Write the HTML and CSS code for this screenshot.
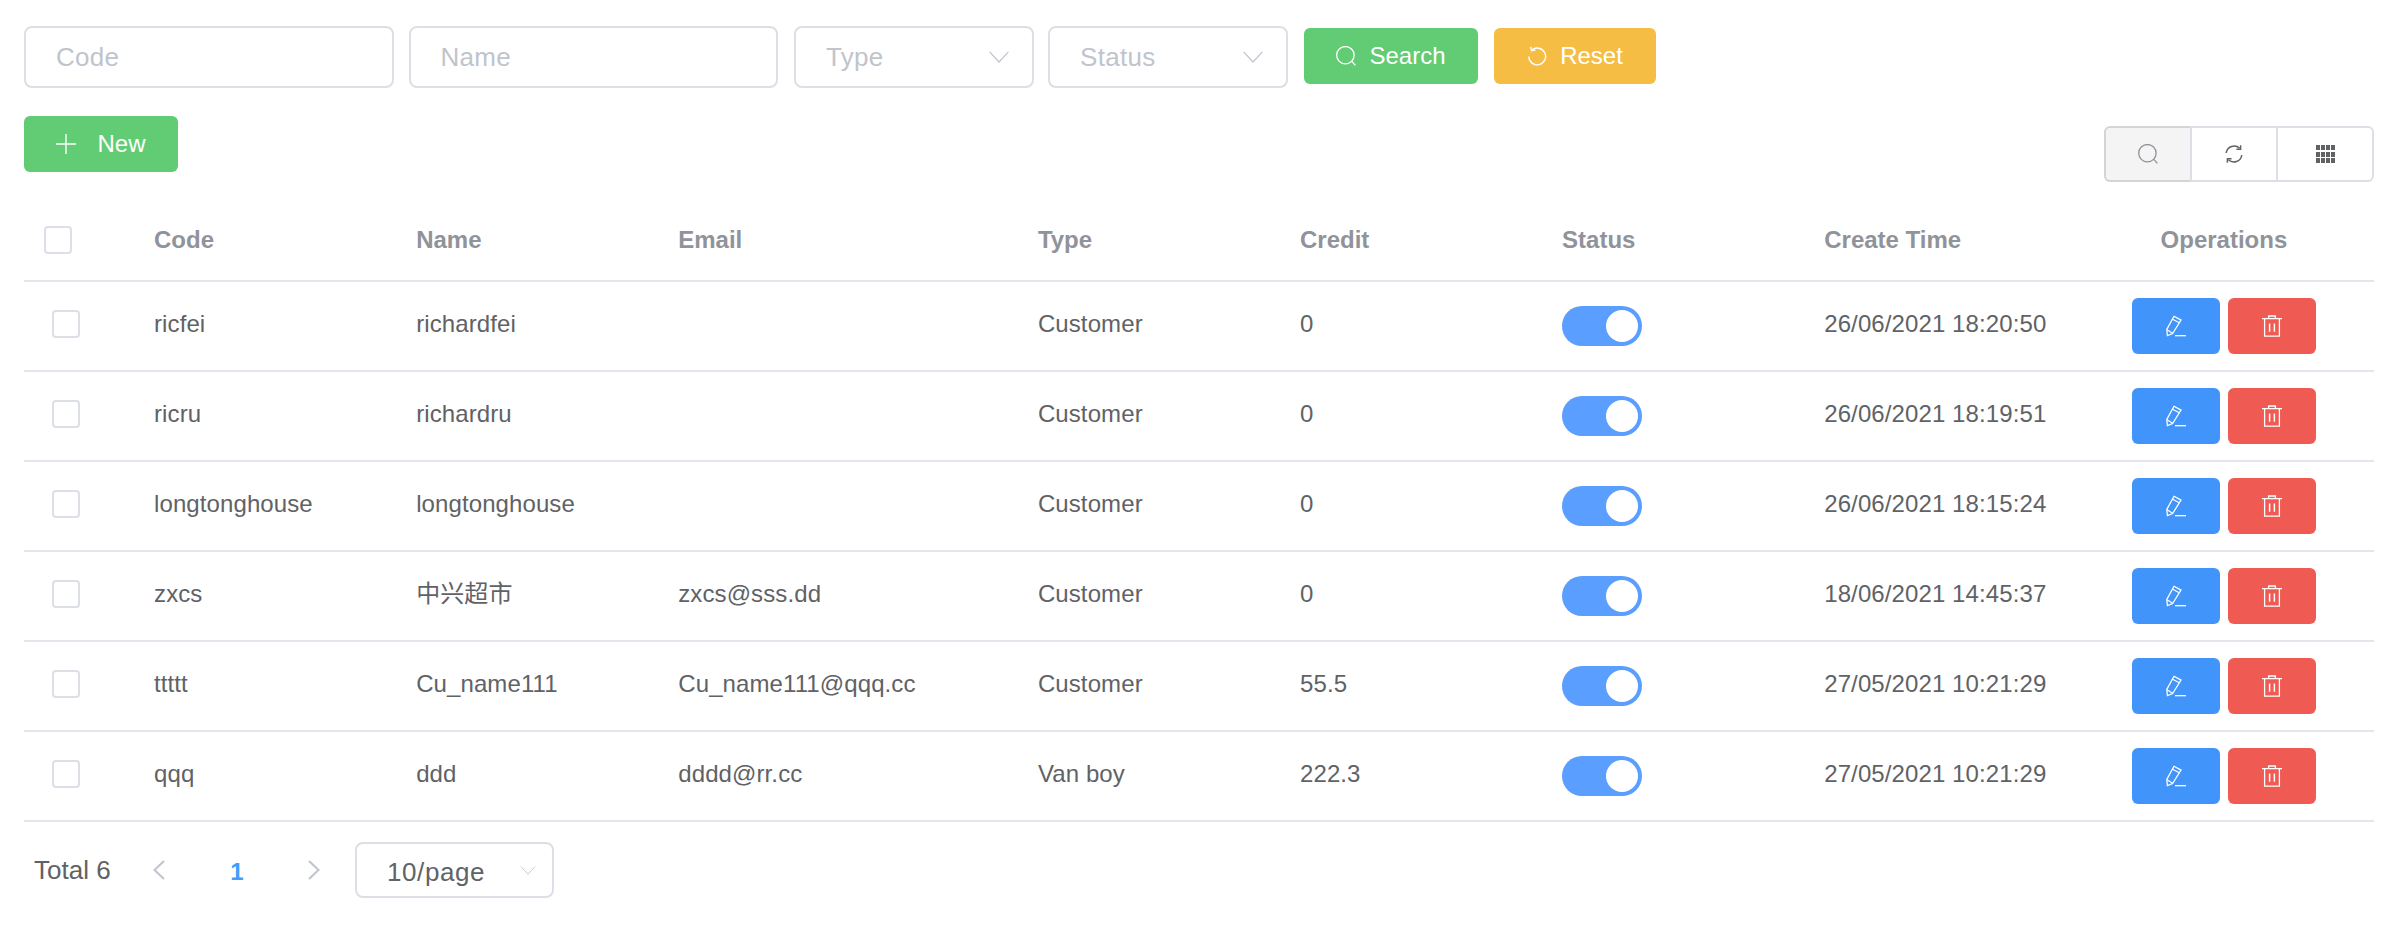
FILE: index.html
```html
<!DOCTYPE html>
<html lang="en">
<head>
  <meta charset="UTF-8" />
  <meta name="viewport" content="width=device-width, initial-scale=1.0" />
  <title>Customers</title>
  <link rel="stylesheet" href="styles.css">
</head>
<body>
  <svg class="sprites" width="0" height="0">
    <symbol id="i-search" viewBox="0 0 20 20">
      <circle cx="9.4" cy="9.2" r="8.7" fill="none" stroke="currentColor" stroke-width="1.3" />
      <path d="M15.8 15.4l3.6 4" fill="none" stroke="currentColor" stroke-width="1.3" />
    </symbol>
    <symbol id="i-reset" viewBox="0 0 20 20">
      <path d="M4.6 4.2A8.4 8.4 0 1 1 1.8 10.6" fill="none" stroke="currentColor" stroke-width="1.4" />
      <path d="M3.6 .8l1 3.8 3.8-.6" fill="none" stroke="currentColor" stroke-width="1.4" />
    </symbol>
    <symbol id="i-chevron" viewBox="0 0 20 12">
      <path d="M.6.8L10 11 19.4.8" fill="none" stroke="currentColor" stroke-width="1.2" />
    </symbol>
    <symbol id="i-plus" viewBox="0 0 20 20">
      <path d="M10 0v20M0 10h20" fill="none" stroke="currentColor" stroke-width="1.4" />
    </symbol>
    <symbol id="i-refresh" viewBox="0 0 18 18">
      <path d="M1.2 8A8 8 0 0 1 14.6 3.2M16.8 10A8 8 0 0 1 3.4 14.8" fill="none" stroke="currentColor" stroke-width="1.5" />
      <path d="M15.6 .2v4h-4.2M2.4 17.8v-4h4.2" fill="none" stroke="currentColor" stroke-width="1.5" />
    </symbol>
    <symbol id="i-edit" viewBox="0 0 20 21">
      <path d="M8 .8l7 3.8-8.4 13.4-5.2 2-.6-6z" fill="none" stroke="currentColor" stroke-width="1.3" />
      <path d="M6.2 3.4l7 3.9M1 14.2l5.6 3.6" fill="none" stroke="currentColor" stroke-width="1.1" />
      <path d="M9 20.2h11" fill="none" stroke="currentColor" stroke-width="1.3" />
    </symbol>
    <symbol id="i-trash" viewBox="0 0 20 22">
      <path d="M0 3.6h20M6.6 3.4V1h6.8v2.4M2.6 3.6v17.6h14.8V3.6" fill="none" stroke="currentColor" stroke-width="1.3" />
      <path d="M7.6 8.4v8.4M12.4 8.4v8.4" fill="none" stroke="currentColor" stroke-width="1.5" />
    </symbol>
  </svg>

  <div class="filters">
    <div class="field field-wide"><span class="placeholder">Code</span></div>
    <div class="field field-wide"><span class="placeholder">Name</span></div>
    <div class="field field-select"><span class="placeholder">Type</span><svg class="chevron"><use href="#i-chevron" /></svg></div>
    <div class="field field-select"><span class="placeholder">Status</span><svg class="chevron"><use href="#i-chevron" /></svg></div>
    <button class="btn btn-green btn-search"><svg class="icon"><use href="#i-search" /></svg>Search</button>
    <button class="btn btn-yellow btn-reset"><svg class="icon icon-reset"><use href="#i-reset" /></svg>Reset</button>
  </div>

  <div class="actions">
    <button class="btn btn-green btn-new"><svg class="icon"><use href="#i-plus" /></svg>New</button>
    <div class="tools">
      <button class="tool tool-active"><svg class="icon"><use href="#i-search" /></svg></button>
      <button class="tool tool-mid"><svg class="icon-sm"><use href="#i-refresh" /></svg></button>
      <button class="tool tool-last">
        <span class="grid-icon"><i></i><i></i><i></i><i></i><i></i><i></i><i></i><i></i><i></i><i></i><i></i><i></i></span>
      </button>
    </div>
  </div>

  <table class="list">
    <colgroup>
      <col class="c-check"><col class="c-std"><col class="c-std"><col class="c-email"><col class="c-std"><col class="c-std"><col class="c-std"><col class="c-time"><col class="c-ops">
    </colgroup>
    <thead>
      <tr>
        <th class="head-check"><span class="checkbox"></span></th>
        <th>Code</th>
        <th>Name</th>
        <th>Email</th>
        <th>Type</th>
        <th>Credit</th>
        <th>Status</th>
        <th>Create Time</th>
        <th class="center">Operations</th>
      </tr>
    </thead>
    <tbody>
      <tr>
        <td class="row-check"><span class="checkbox"></span></td>
        <td>ricfei</td>
        <td>richardfei</td>
        <td></td>
        <td>Customer</td>
        <td>0</td>
        <td><span class="switch"></span></td>
        <td>26/06/2021 18:20:50</td>
        <td class="ops"><button class="op op-edit"><svg class="op-icon"><use href="#i-edit" /></svg></button><button class="op op-del"><svg class="op-icon"><use href="#i-trash" /></svg></button></td>
      </tr>
      <tr>
        <td class="row-check"><span class="checkbox"></span></td>
        <td>ricru</td>
        <td>richardru</td>
        <td></td>
        <td>Customer</td>
        <td>0</td>
        <td><span class="switch"></span></td>
        <td>26/06/2021 18:19:51</td>
        <td class="ops"><button class="op op-edit"><svg class="op-icon"><use href="#i-edit" /></svg></button><button class="op op-del"><svg class="op-icon"><use href="#i-trash" /></svg></button></td>
      </tr>
      <tr>
        <td class="row-check"><span class="checkbox"></span></td>
        <td>longtonghouse</td>
        <td>longtonghouse</td>
        <td></td>
        <td>Customer</td>
        <td>0</td>
        <td><span class="switch"></span></td>
        <td>26/06/2021 18:15:24</td>
        <td class="ops"><button class="op op-edit"><svg class="op-icon"><use href="#i-edit" /></svg></button><button class="op op-del"><svg class="op-icon"><use href="#i-trash" /></svg></button></td>
      </tr>
      <tr>
        <td class="row-check"><span class="checkbox"></span></td>
        <td>zxcs</td>
        <td>中兴超市</td>
        <td>zxcs@sss.dd</td>
        <td>Customer</td>
        <td>0</td>
        <td><span class="switch"></span></td>
        <td>18/06/2021 14:45:37</td>
        <td class="ops"><button class="op op-edit"><svg class="op-icon"><use href="#i-edit" /></svg></button><button class="op op-del"><svg class="op-icon"><use href="#i-trash" /></svg></button></td>
      </tr>
      <tr>
        <td class="row-check"><span class="checkbox"></span></td>
        <td>ttttt</td>
        <td>Cu_name111</td>
        <td>Cu_name111@qqq.cc</td>
        <td>Customer</td>
        <td>55.5</td>
        <td><span class="switch"></span></td>
        <td>27/05/2021 10:21:29</td>
        <td class="ops"><button class="op op-edit"><svg class="op-icon"><use href="#i-edit" /></svg></button><button class="op op-del"><svg class="op-icon"><use href="#i-trash" /></svg></button></td>
      </tr>
      <tr>
        <td class="row-check"><span class="checkbox"></span></td>
        <td>qqq</td>
        <td>ddd</td>
        <td>dddd@rr.cc</td>
        <td>Van boy</td>
        <td>222.3</td>
        <td><span class="switch"></span></td>
        <td>27/05/2021 10:21:29</td>
        <td class="ops"><button class="op op-edit"><svg class="op-icon"><use href="#i-edit" /></svg></button><button class="op op-del"><svg class="op-icon"><use href="#i-trash" /></svg></button></td>
      </tr>
    </tbody>
  </table>

  <div class="pager">
    <span class="total">Total 6</span>
    <svg class="arrow arrow-prev" viewBox="0 0 12 20"><path d="M11 1L1.5 10 11 19" /></svg>
    <span class="page">1</span>
    <svg class="arrow arrow-next" viewBox="0 0 12 20"><path d="M1 1l9.5 9L1 19" /></svg>
    <div class="field page-size"><span class="size-text">10/page</span><svg class="chevron chevron-sm"><use href="#i-chevron" /></svg></div>
  </div>
</body>
</html>
```

FILE: styles.css
```css
* {
  box-sizing: border-box;
}
html, body {
  margin: 0;
  background: #fff;
}
body {
  padding: 26px 30px 0 24px;
  font-family: "Liberation Sans", "Noto Sans CJK SC", Arial, sans-serif;
  font-size: 24px;
  color: #606266;
}
.sprites {
  position: absolute;
}

/* Filter row */
.filters {
  display: flex;
  align-items: flex-start;
  gap: 15px;
}
.field {
  display: flex;
  align-items: center;
  justify-content: space-between;
  height: 62px;
  background: #fff;
  border: 2px solid #dcdfe6;
  border-radius: 8px;
  font-size: 26px;
  letter-spacing: 0.3px;
}
.field-wide {
  width: 369.5px;
  padding: 0 30px;
}
.field-select {
  width: 240px;
  margin-left: 1px;
  padding: 0 23px 0 30px;
}
.field-select + .field-select {
  margin-left: -1px;
}
.placeholder {
  color: #c0c4cc;
}
.chevron {
  width: 20px;
  height: 12px;
  color: #c0c4cc;
}

/* Buttons */
.btn {
  display: flex;
  align-items: center;
  justify-content: center;
  height: 56px;
  padding: 0;
  border: 0;
  border-radius: 6px;
  color: #fff;
  font-family: inherit;
  font-size: 24px;
}
.btn-green {
  background: #62cc74;
}
.btn-yellow {
  background: #f6bd44;
}
.btn-search {
  width: 174px;
  margin-top: 2px;
  margin-left: 1px;
  gap: 13px;
}
.btn-reset {
  width: 162px;
  margin-top: 2px;
  margin-left: 1px;
  gap: 13px;
}
.btn-new {
  width: 154px;
  gap: 21px;
}
.icon {
  width: 20px;
  height: 20px;
}
.icon-sm {
  width: 18px;
  height: 18px;
}

/* New button and table tools */
.actions {
  display: flex;
  justify-content: space-between;
  align-items: flex-start;
  margin-top: 28px;
  margin-bottom: 17px;
}
.tools {
  display: flex;
  margin-top: 10px;
}
.tool {
  display: flex;
  align-items: center;
  justify-content: center;
  height: 56px;
  padding: 0;
  background: #fff;
  border: 2px solid #dcdfe6;
  color: #606266;
}
.tool-active {
  width: 88px;
  background: #f4f4f5;
  border-color: #d3d4d6;
  border-right-color: #dcdfe6;
  border-radius: 6px 0 0 6px;
  color: #909399;
}
.tool-mid {
  width: 88px;
  margin-left: -2px;
}
.tool-last {
  width: 98px;
  margin-left: -2px;
  border-radius: 0 6px 6px 0;
}
.grid-icon {
  display: grid;
  grid-template-columns: repeat(4, 4px);
  grid-auto-rows: 5px;
  gap: 1.5px 1px;
  width: 19px;
}
.grid-icon i {
  background: #606266;
}

/* Table */
.list {
  width: 2350px;
  table-layout: fixed;
  border-collapse: separate;
  border-spacing: 0;
}
.c-check { width: 110px; }
.c-std { width: 262px; }
.c-email { width: 359.5px; }
.c-time { width: 269.5px; }
.c-ops { width: 300px; }
th, td {
  padding: 0 20px;
  text-align: left;
  white-space: nowrap;
  border-bottom: 2px solid #e3e6ec;
}
th {
  height: 83px;
  color: #909399;
  font-weight: bold;
}
td {
  height: 90px;
  padding-bottom: 4px;
  line-height: 28px;
  letter-spacing: 0.1px;
}
th.center {
  text-align: center;
}
.checkbox {
  display: block;
  width: 28px;
  height: 28px;
  background: #fff;
  border: 2px solid #dcdfe6;
  border-radius: 4px;
}
.head-check {
  padding-left: 20px;
}
.row-check {
  padding-left: 28px;
}
.row-check .checkbox {
  margin-top: -1px;
}
.switch {
  display: block;
  position: relative;
  width: 80px;
  height: 40px;
  margin-top: 4px;
  background: #5a9eff;
  border-radius: 20px;
}
.switch::after {
  content: "";
  position: absolute;
  top: 4px;
  right: 4px;
  width: 32px;
  height: 32px;
  background: #fff;
  border-radius: 50%;
}
td.ops {
  padding: 0;
  text-align: center;
}
.op {
  display: inline-flex;
  align-items: center;
  justify-content: center;
  width: 88px;
  height: 56px;
  padding: 0;
  border: 0;
  border-radius: 6px;
  color: #fff;
  vertical-align: middle;
}
.op + .op {
  margin-left: 8px;
}
.op-edit {
  background: #4194f9;
}
.op-del {
  background: #ef5a53;
}
.op-icon {
  width: 20px;
  height: 22px;
}

/* Pagination */
.pager {
  display: flex;
  align-items: center;
  height: 56px;
  margin-top: 20px;
}
.total {
  margin-left: 10px;
  width: 119px;
  font-size: 26px;
}
.arrow {
  width: 12px;
  height: 20px;
  fill: none;
  stroke: #c0c4cc;
  stroke-width: 2;
}
.arrow-next {
  margin-left: -1px;
}
.page {
  width: 144px;
  margin-top: 4px;
  text-align: center;
  color: #409eff;
  font-weight: bold;
}
.page-size {
  width: 199px;
  height: 56px;
  margin-left: 35px;
  padding: 0 16px 0 30px;
  letter-spacing: 0.6px;
}
.size-text {
  margin-top: 4px;
  color: #606266;
}
.chevron-sm {
  width: 16px;
  height: 9px;
  color: #c0c4cc;
}
```
